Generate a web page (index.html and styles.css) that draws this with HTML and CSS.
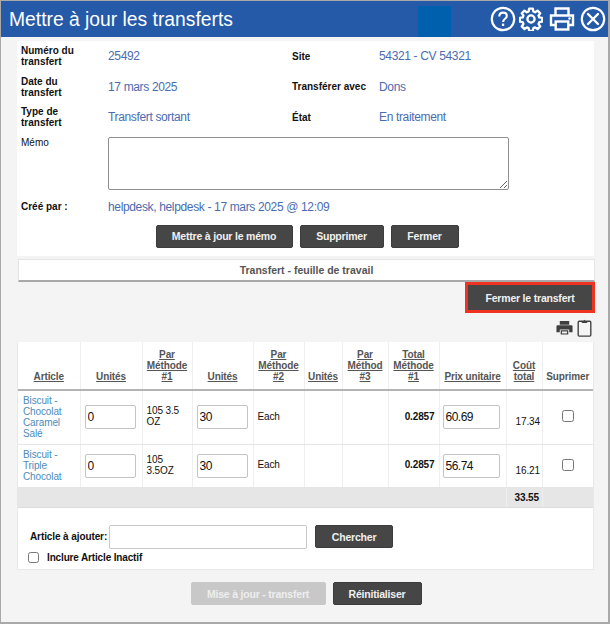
FILE: index.html
```
<!DOCTYPE html>
<html lang="fr">
<head>
<meta charset="utf-8">
<title>Mettre à jour les transferts</title>
<link rel="stylesheet" href="styles.css">
</head>
<body>
<div class="window">
  <header class="titlebar">
    <h1 class="title">Mettre à jour les transferts</h1>
    <div class="title-block"></div>
    <div class="title-icons">
      <svg class="ticon" viewBox="0 0 26 26"><circle cx="13" cy="13" r="11.2" fill="none" stroke="#fff" stroke-width="2.2"/><path d="M9.3 10.4c0-2.4 1.7-3.8 3.8-3.8s3.7 1.3 3.7 3.3c0 2.900-3.700 2.900-3.700 6" fill="none" stroke="#fff" stroke-width="2.100"/><rect x="11.900" y="17.600" width="2.300" height="2.400" fill="#fff"/></svg>
      <svg class="ticon ticon-gear" viewBox="0 0 26 26"><path d="M11 1.800h4l.6 3.100 1.900.8 2.600-1.800 2.900 2.900-1.800 2.600.8 1.900 3.100.6v4l-3.100.6-.8 1.900 1.800 2.600-2.900 2.900-2.600-1.800-1.900.8-.6 3.100h-4l-.6-3.100-1.900-.8-2.600 1.800-2.900-2.900 1.800-2.600-.8-1.900-3.100-.6v-4l3.100-.6.8-1.900-1.800-2.600 2.900-2.900 2.600 1.800 1.900-.8z" fill="none" stroke="#fff" stroke-width="2.500" stroke-linejoin="round"/><circle cx="13" cy="13" r="3.900" fill="none" stroke="#fff" stroke-width="2.500"/></svg>
      <svg class="ticon ticon-print" viewBox="0 0 26 26"><path d="M6.500 9V2.500h13V9M6.500 19H2V9.500h22V19h-4.500" fill="none" stroke="#fff" stroke-width="2.400"/><rect x="6.700" y="15.500" width="12.600" height="8" fill="none" stroke="#fff" stroke-width="2.400"/><circle cx="20.500" cy="12.500" r="1.200" fill="#fff"/></svg>
      <svg class="ticon ticon-close" viewBox="0 0 26 26"><circle cx="13" cy="13" r="11.200" fill="none" stroke="#fff" stroke-width="2.200"/><path d="M8 8l10 10M18 8L8 18" stroke="#fff" stroke-width="2.400" stroke-linecap="round"/></svg>
    </div>
  </header>

  <main class="content">
    <section class="panel">
      <div class="info-row">
        <div class="label">Numéro du transfert</div><div class="value">25492</div>
        <div class="label label-b">Site</div><div class="value">54321 - CV 54321</div>
      </div>
      <div class="info-row">
        <div class="label">Date du transfert</div><div class="value">17 mars 2025</div>
        <div class="label label-b">Transférer avec</div><div class="value">Dons</div>
      </div>
      <div class="info-row">
        <div class="label">Type de transfert</div><div class="value">Transfert sortant</div>
        <div class="label label-b">État</div><div class="value">En traitement</div>
      </div>
      <div class="memo-row">
        <div class="label label-plain">Mémo</div>
        <textarea class="memo"></textarea>
      </div>
      <div class="creator-row">
        <div class="label">Créé par :</div><div class="value">helpdesk, helpdesk - 17 mars 2025 @ 12:09</div>
      </div>
      <div class="panel-actions">
        <button class="btn btn-memo">Mettre à jour le mémo</button>
        <button class="btn btn-del">Supprimer</button>
        <button class="btn btn-close">Fermer</button>
      </div>
    </section>

    <div class="sheet-title">Transfert - feuille de travail</div>

    <div class="close-row">
      <div class="highlight"><button class="btn btn-transfer">Fermer le transfert</button></div>
    </div>

    <div class="tools">
      <svg class="tool-print" viewBox="0 0 18 18"><path d="M4 6V2h10v4zM1.500 6.500h15a1 1 0 0 1 1 1V14H14v-3H4v3H.5V7.500a1 1 0 0 1 1-1zM5 12h8v4.500H5z" fill="#3f3f3f"/><path d="M6.300 13.200h5.400v2.100H6.300z" fill="#f4f4f4"/></svg>
      <svg class="tool-clip" viewBox="0 0 16 20"><rect x="1" y="2.500" width="14" height="16.500" rx="1.200" fill="none" stroke="#3f3f3f" stroke-width="1.500"/><path d="M5 4.500V2.200h2l1-1.400 1 1.400h2v2.300z" fill="#3f3f3f"/></svg>
    </div>

    <section class="sheet">
      <table class="grid">
        <colgroup>
          <col class="c1"><col class="c2"><col class="c3"><col class="c4"><col class="c5"><col class="c6"><col class="c7"><col class="c8"><col class="c9"><col class="c10"><col class="c11">
        </colgroup>
        <thead>
          <tr>
            <th><u>Article</u></th><th><u>Unités</u></th><th><u>Par Méthode #1</u></th><th><u>Unités</u></th><th><u>Par Méthode #2</u></th><th><u>Unités</u></th><th><u>Par Méthod #3</u></th><th><u>Total Méthode #1</u></th><th><u>Prix unitaire</u></th><th><u>Coût total</u></th><th>Suprimer</th>
          </tr>
        </thead>
        <tbody>
          <tr class="row-a">
            <td class="item">Biscuit - Chocolat Caramel Salé</td>
            <td><input class="qty" value="0"></td>
            <td class="txt">105 3.5 OZ</td>
            <td><input class="qty" value="30"></td>
            <td class="txt">Each</td><td></td><td></td>
            <td class="num">0.2857</td>
            <td><input class="price" value="60.69"></td>
            <td class="cost">17.34</td>
            <td class="chk"><input type="checkbox"></td>
          </tr>
          <tr class="row-b">
            <td class="item">Biscuit - Triple Chocolat</td>
            <td><input class="qty" value="0"></td>
            <td class="txt">105 3.5OZ</td>
            <td><input class="qty" value="30"></td>
            <td class="txt">Each</td><td></td><td></td>
            <td class="num">0.2857</td>
            <td><input class="price" value="56.74"></td>
            <td class="cost">16.21</td>
            <td class="chk"><input type="checkbox"></td>
          </tr>
          <tr class="totals">
            <td colspan="9"></td><td class="total">33.55</td><td></td>
          </tr>
        </tbody>
      </table>
      <div class="add-row">
        <label class="add-label" for="add">Article à ajouter:</label>
        <input id="add" class="add-input">
        <button class="btn btn-search">Chercher</button>
      </div>
      <label class="inactive"><input type="checkbox"><span>Inclure Article Inactif</span></label>
    </section>

    <div class="bottom-actions">
      <button class="btn btn-update" disabled>Mise à jour - transfert</button>
      <button class="btn btn-reset">Réinitialiser</button>
    </div>
  </main>
</div>
</body>
</html>
```

FILE: styles.css
```
* { box-sizing: border-box; }
html, body { margin: 0; padding: 0; }
body { width: 610px; height: 624px; overflow: hidden; font-family: "Liberation Sans", Arial, sans-serif; background: #f4f4f4; }
.window { width: 610px; height: 624px; border: 1px solid #a9a9a9; border-width: 1px 2px 2px 1px; background: #f4f4f4; }

.titlebar { height: 36px; background: #255aa8; display: flex; align-items: flex-end; position: relative; }
.title { margin: 0; align-self: flex-start; padding-left: 8px; font-size: 19.300px; font-weight: 400; color: #fff; flex: 1; line-height: 38px; }
.title-block { width: 33px; height: 31px; background: #0060ae; margin-right: 157px; }
.title-icons { position: absolute; right: 2px; top: 5px; display: flex; align-items: center; }
.ticon { width: 26px; height: 26px; display: block; }
.ticon-gear { width: 24px; height: 24px; margin-left: 3px; }
.ticon-print { margin-left: 6px; }
.ticon-close { margin-left: 5px; }

.content { padding: 4px 14px 0 16px; }
.panel { background: #fff; height: 215px; padding: 4px 4px 0 4px; }
.info-row { display: grid; grid-template-columns: 87px 184px 87px 1fr; height: 30.500px; align-items: center; }
.label { font-size: 10px; font-weight: 700; line-height: 11px; color: #111; padding-bottom: 8px; width: 62px; }
.label-b { width: auto; white-space: nowrap; padding-bottom: 8px; }
.label-plain { font-weight: 400; padding: 0; }
.value { font-size: 12px; letter-spacing: -0.35px; color: #4a6cb0; padding-bottom: 8px; }
.memo-row { display: grid; grid-template-columns: 87px 1fr; height: 53px; }
.memo { width: 401px; height: 53px; border: 1px solid #8f8f8f; border-radius: 2px; background: #fff; margin: 0; display: block; }
.creator-row { display: grid; grid-template-columns: 87px 1fr; height: 22px; align-items: center; margin-top: 6px; }
.creator-row .label, .creator-row .value { padding: 0; }
.panel-actions { display: flex; justify-content: center; gap: 7px; margin-top: 7px; padding-left: 3px; }

.btn { font-family: "Liberation Sans", Arial, sans-serif; font-size: 10.500px; letter-spacing: -0.2px; font-weight: 700; height: 23px; background: #464646; color: #f0f0f0; border: 1px solid #3c3c3c; border-radius: 2px; padding: 0; }
.btn-memo { width: 137px; }
.btn-del { width: 84px; }
.btn-close { width: 68px; }

.sheet-title { margin-top: 3px; height: 23px; width: 577px; margin-left: 1px; background: #fff; border: 1px solid #e4e4e4; border-bottom: 2px solid #a8a8a8; font-size: 10.500px; font-weight: 700; color: #555; text-align: center; line-height: 20px; }
.close-row { display: flex; justify-content: flex-end; margin-right: -1px; }
.highlight { width: 130px; height: 31px; background: #464646; border: 3.500px solid #ee3322; display: flex; }
.btn-transfer { width: 100%; height: 100%; border: 0; }
.tools { display: flex; justify-content: flex-end; align-items: center; gap: 4px; height: 29px; padding-right: 2px; }
.tool-print { width: 17px; height: 17px; }
.tool-clip { width: 15px; height: 18px; }

.sheet { background: #fff; width: 577px; height: 228px; border: 1px solid #e8e8e8; border-top: 0; }
.grid { width: 575px; table-layout: fixed; border-collapse: collapse; font-size: 10px; letter-spacing: -0.12px; }
.c1 { width: 62px; } .c2 { width: 62px; } .c3 { width: 50px; } .c4 { width: 61px; } .c5 { width: 51px; } .c6 { width: 38px; } .c7 { width: 46px; } .c8 { width: 51px; } .c9 { width: 67px; } .c10 { width: 36px; } .c11 { width: 51px; }
.grid th { height: 48px; vertical-align: bottom; padding: 0 2px 7px; font-size: 10px; line-height: 11px; font-weight: 700; color: #555; text-align: center; border-right: 1.500px solid #efefef; border-bottom: 2px solid #b4b4b4; }
.grid td { padding: 0; border-right: 1.500px solid #efefef; border-bottom: 1px solid #e6e6e6; vertical-align: middle; line-height: 11px; color: #111; }
.grid th:last-child, .grid td:last-child { border-right: 0; }
.row-a td { height: 54px; }
.row-b td { height: 43px; }
.grid .item { color: #4b8cbc; padding-left: 5px; }
.grid .txt { padding: 0 0 2px 4px; }
.grid .num { font-weight: 700; text-align: right; padding: 0 4px 2px 0; }
.qty, .price { display: block; font-family: "Liberation Sans", Arial, sans-serif; font-size: 12px; letter-spacing: -0.5px; color: #111; height: 24px; border: 1px solid #c4c4c4; border-radius: 2px; background: #fff; padding: 0 2px; margin-left: 4px; }
.qty { width: 51px; }
.price { width: 57px; margin-left: 3px; }
.grid .cost { padding: 9px 0 0 9px; }
.chk { text-align: center; }
.chk input { margin: 0; width: 12px; height: 12px; }
.grid .totals td { height: 20px; background: #e6e6e6; border-bottom: 1px solid #dcdcdc; }
.grid .total { font-weight: 700; padding-left: 8px; }
.add-row { display: flex; align-items: center; margin-top: 17px; padding-left: 12px; height: 24px; }
.add-label { font-size: 10px; letter-spacing: -0.1px; font-weight: 700; color: #111; margin-right: 2px; }
.add-input { width: 198px; height: 24px; border: 1px solid #c8c8c8; border-radius: 2px; background: #fff; }
.btn-search { width: 78px; margin-left: 8px; }
.inactive { display: flex; align-items: center; margin-top: 3px; padding-left: 10px; font-size: 10px; letter-spacing: -0.15px; font-weight: 700; color: #111; }
.inactive input { margin: 0 8px 0 0; width: 11px; height: 11px; }
.bottom-actions { display: flex; justify-content: center; gap: 7px; margin-top: 12px; padding-left: 1px; }
.btn-update { width: 135px; background: #c8c8c8; border-color: #c8c8c8; color: #eee; }
.btn-reset { width: 89px; }
```
